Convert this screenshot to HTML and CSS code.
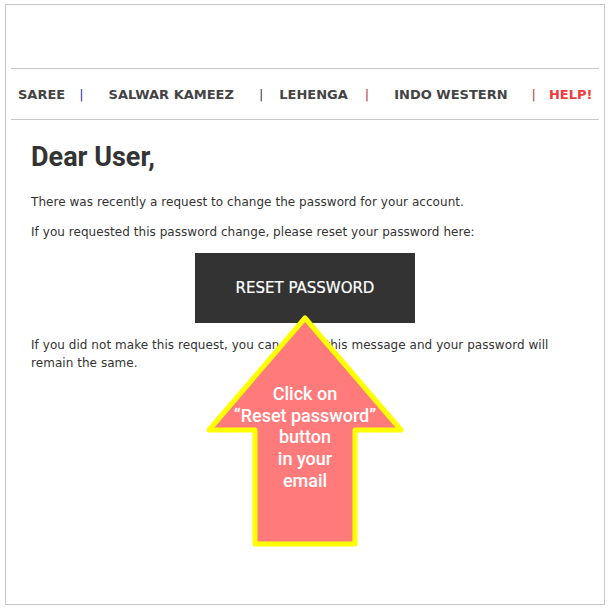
FILE: index.html
```html
<!DOCTYPE html>
<html>
<head>
<meta charset="utf-8">
<link rel="stylesheet" href="styles.css">
</head>
<body>
<div class="frame">
  <nav class="nav">
    <span class="item i1">SAREE</span><span class="sep s1">|</span>
    <span class="item i2">SALWAR KAMEEZ</span><span class="sep s2">|</span>
    <span class="item i3">LEHENGA</span><span class="sep s3">|</span>
    <span class="item i4">INDO WESTERN</span><span class="sep s4">|</span>
    <span class="item i5 help">HELP!</span>
  </nav>
  <main class="content">
    <h1 class="title">Dear User,</h1>
    <p class="text">There was recently a request to change the password for your account.</p>
    <p class="text">If you requested this password change, please reset your password here:</p>
    <div class="btn-row"><a class="btn">RESET PASSWORD</a></div>
    <p class="text last">If you did not make this request, you can ignore this message and your password will remain the same.</p>
  </main>
  <div class="callout">
    <svg class="arrow" width="610" height="610" viewBox="0 0 610 610">
      <polygon points="305,318 401,430 355,430 355,544 255,544 255,430 209,430" fill="#ff7b7b" stroke="#ffff00" stroke-width="5" stroke-linejoin="round"/>
    </svg>
    <div class="callout-text">Click on<br>“Reset password”<br>button<br>in your<br>email</div>
  </div>
</div>
</body>
</html>
```

FILE: styles.css
```css
html, body {
  margin: 0;
  padding: 0;
  background: #fff;
}
.frame {
  position: relative;
  margin: 4px 0 0 5px;
  width: 600px;
  height: 601px;
  border: 1px solid #c8c8c8;
  padding: 0 5px;
  box-sizing: border-box;
}
.nav {
  margin-top: 63px;
  height: 50px;
  border-top: 1px solid #c8c8c8;
  border-bottom: 1px solid #c8c8c8;
  display: flex;
  align-items: center;
  font-family: "DejaVu Sans", Verdana, sans-serif;
  font-weight: bold;
  font-size: 13px;
  color: #444;
  white-space: nowrap;
}
.item { display: block; }
.sep { display: block; font-weight: normal; }
.i1 { margin-left: 7px; }
.s1 { margin-left: 14px; color: #2a3ab0; }
.i2 { margin-left: 25px; }
.s2 { margin-left: 25px; color: #445; }
.i3 { margin-left: 16px; }
.s3 { margin-left: 17px; color: #b04040; }
.i4 { margin-left: 25px; }
.s4 { margin-left: 24px; color: #b04848; }
.i5 { margin-left: 13px; }
.help { color: #f03a3a; }
.content {
  padding: 20px 15px 0 20px;
  font-family: "DejaVu Sans", Verdana, sans-serif;
  font-size: 12px;
  color: #333;
}
.title {
  margin: 0 0 19px;
  font-family: Roboto, "Liberation Sans", sans-serif;
  font-weight: bold;
  font-size: 27px;
  line-height: 34px;
  color: #333;
}
.text {
  margin: 0 0 12px;
  line-height: 18px;
  letter-spacing: 0.05px;
}
.btn-row {
  display: flex;
  justify-content: center;
  margin: 0 0 13px;
  padding-right: 5px;
}
.btn {
  display: flex;
  align-items: center;
  justify-content: center;
  width: 220px;
  height: 70px;
  background: #333;
  color: #fff;
  font-size: 15px;
  text-decoration: none;
  -webkit-text-stroke: 0.2px #fff;
}
.last { line-height: 18px; }
.callout {
  position: absolute;
  left: -6px;
  top: -5px;
  width: 610px;
  height: 610px;
  pointer-events: none;
}
.arrow {
  position: absolute;
  left: 0;
  top: 0;
}
.callout-text {
  position: absolute;
  left: 205px;
  top: 383px;
  width: 200px;
  text-align: center;
  font-family: Roboto, "Liberation Sans", sans-serif;
  font-weight: 500;
  font-size: 18px;
  line-height: 21.7px;
  color: #fff;
}
```
